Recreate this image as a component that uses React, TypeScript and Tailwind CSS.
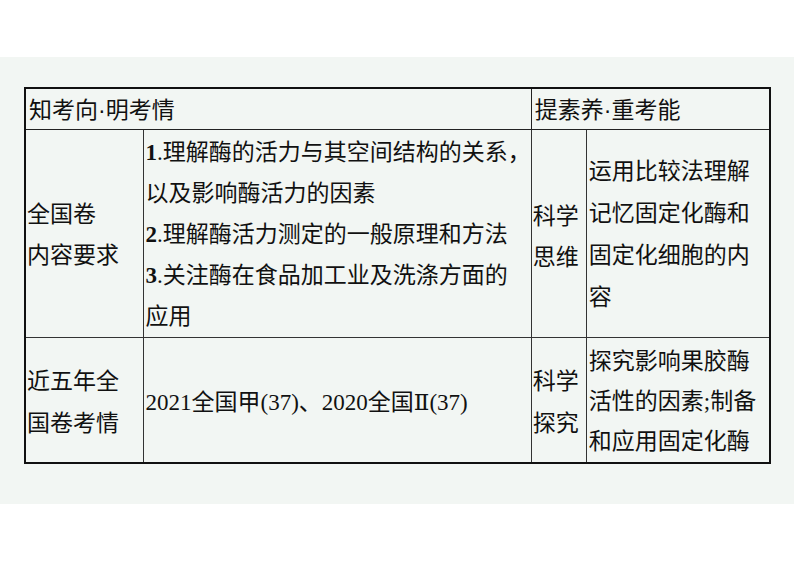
import React from 'react';

const serif = 'font-["Liberation_Serif","DejaVu_Serif","Noto_Sans_CJK_SC",serif]';
const sans = 'font-["Liberation_Sans","Noto_Sans_CJK_SC",sans-serif]';

const App = () => {
  const requirements = [
    { num: "1", lines: ["理解酶的活力与其空间结构的关系，", "以及影响酶活力的因素"] },
    { num: "2", lines: ["理解酶活力测定的一般原理和方法"] },
    { num: "3", lines: ["关注酶在食品加工业及洗涤方面的", "应用"] }
  ];

  return (
    <div className="w-[794px] h-[562px] bg-white pt-[57px]">
      <div className="h-[447px] bg-[#f2f6f3] pt-[30px] pl-[24px]">
        <table className={`table-fixed border-collapse border-2 border-[#111] text-[#111] text-[23px] ${serif}`}>
          <colgroup>
            <col className="w-[118px]" />
            <col className="w-[386px]" />
            <col className="w-[55px]" />
            <col className="w-[184px]" />
          </colgroup>
          <tbody>
            {/* header */}
            <tr className="h-[41px]">
              <td colSpan={2} className={`border border-[#222] pl-[3px] pt-[4px] leading-none align-middle ${sans}`}>
                知考向·明考情
              </td>
              <td colSpan={2} className={`border border-[#222] pl-[3px] pt-[4px] leading-none align-middle ${sans}`}>
                提素养·重考能
              </td>
            </tr>

            {/* 全国卷内容要求 */}
            <tr className="h-[208px] leading-[41px]">
              <td className="border border-[#333] pl-[1px] pt-[4px] align-middle whitespace-nowrap">
                全国卷<br />内容要求
              </td>
              <td className="border border-[#333] pl-[2px] pt-[2px] align-middle whitespace-nowrap">
                {requirements.map((item) => (
                  <div key={item.num}>
                    {item.lines.map((line, i) => (
                      <div key={i}>
                        {i === 0 && <span className="font-bold">{item.num}</span>}
                        {i === 0 && "."}
                        {line}
                      </div>
                    ))}
                  </div>
                ))}
              </td>
              <td className="border border-[#333] pl-[1px] pt-[8px] align-middle whitespace-nowrap">
                科学<br />思维
              </td>
              <td className="border border-[#333] pl-[2px] pt-[4px] leading-[42px] align-middle whitespace-nowrap">
                运用比较法理解<br />记忆固定化酶和<br />固定化细胞的内<br />容
              </td>
            </tr>

            {/* 近五年全国卷考情 */}
            <tr className="h-[124px] leading-[42px]">
              <td className="border border-[#333] pl-[1px] pt-[6px] align-middle whitespace-nowrap">
                近五年全<br />国卷考情
              </td>
              <td className="border border-[#333] pl-[2px] pt-[6px] align-middle whitespace-nowrap">
                2021全国甲(37)、2020全国Ⅱ(37)
              </td>
              <td className="border border-[#333] pl-[1px] pt-[6px] align-middle whitespace-nowrap">
                科学<br />探究
              </td>
              <td className="border border-[#333] pl-[2px] pt-[4px] leading-[40px] align-middle whitespace-nowrap">
                探究影响果胶酶<br />活性的因素;制备<br />和应用固定化酶
              </td>
            </tr>
          </tbody>
        </table>
      </div>
    </div>
  );
};

export default App;
